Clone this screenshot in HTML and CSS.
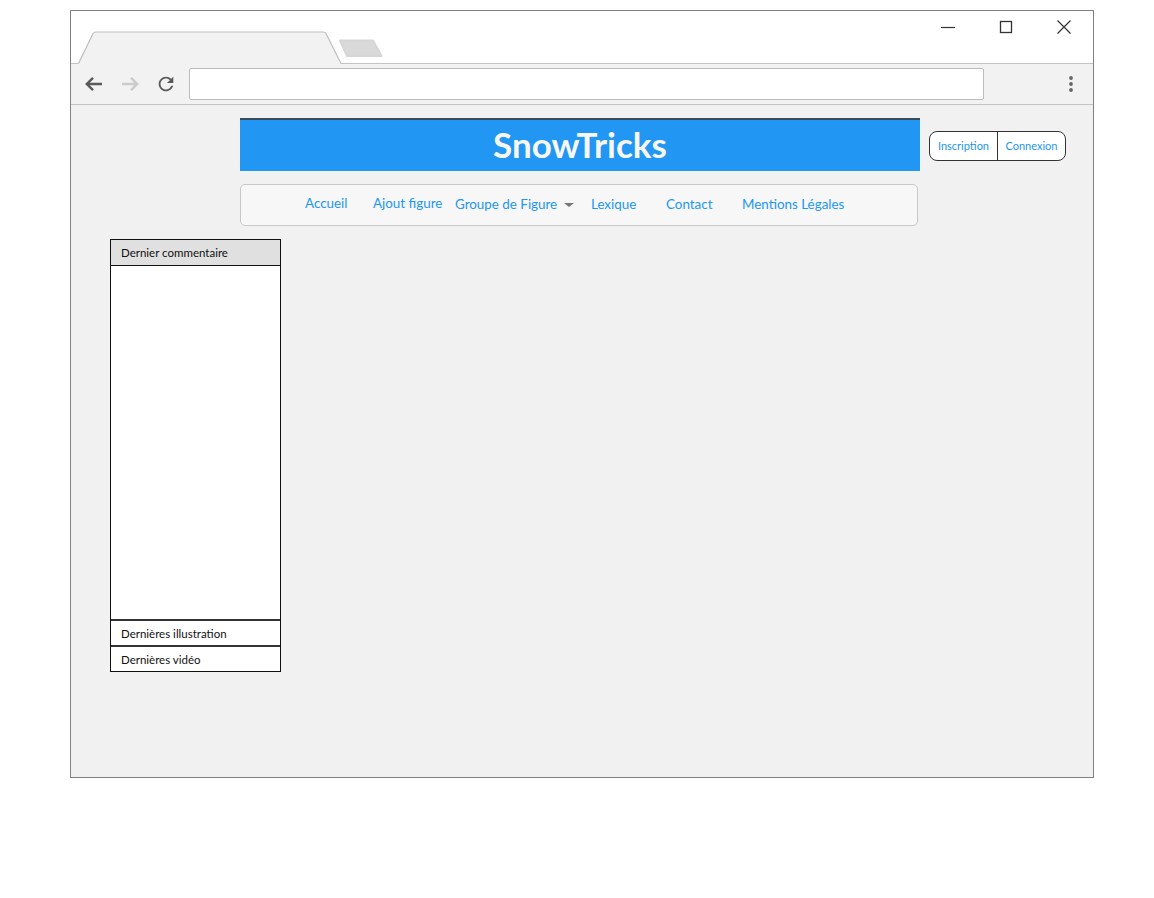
FILE: index.html
```html
<!DOCTYPE html>
<html lang="fr">
<head>
<meta charset="utf-8">
<title>SnowTricks</title>
<link rel="stylesheet" href="styles.css">
</head>
<body>
<div class="window">
  <div class="titlebar">
    <svg class="tabs" width="320" height="53" viewBox="0 0 320 53">
      <path d="M7,53 L22,22.5 Q23,21 25,21 L252,21 Q254,21 255,22.5 L270,53 Z" fill="#f2f2f2"/>
      <path d="M7.5,52.5 L22,22.5 Q23,21 25,21 L252,21 Q254,21 255,22.5 L270,52.5" fill="none" stroke="#bdbdbd" stroke-width="1.2"/>
      <path d="M269,29.5 L302,29.5 L310.5,45 L276,45 Z" fill="#d9d9d9" stroke="#d6d6d6" stroke-width="2" stroke-linejoin="round"/>
    </svg>
    <div class="controls">
      <div class="ctl">
        <svg width="16" height="16" viewBox="0 0 16 16"><path d="M1,8.5 H15" stroke="#333" stroke-width="1.2"/></svg>
      </div>
      <div class="ctl">
        <svg width="16" height="16" viewBox="0 0 16 16"><rect x="2.5" y="2.5" width="11" height="11" fill="none" stroke="#333" stroke-width="1.3"/></svg>
      </div>
      <div class="ctl">
        <svg width="16" height="16" viewBox="0 0 16 16"><path d="M1.5,1.5 L14.5,14.5 M14.5,1.5 L1.5,14.5" stroke="#333" stroke-width="1.2"/></svg>
      </div>
    </div>
  </div>
  <div class="toolbar">
    <div class="tool">
      <svg width="20" height="20" viewBox="0 0 20 20"><path d="M18,10 H3 M9,3.8 L2.8,10 L9,16.2" fill="none" stroke="#5a5a5a" stroke-width="2.4"/></svg>
    </div>
    <div class="tool">
      <svg width="20" height="20" viewBox="0 0 20 20"><path d="M2,10 H17 M11,3.8 L17.2,10 L11,16.2" fill="none" stroke="#cccccc" stroke-width="2.4"/></svg>
    </div>
    <div class="tool">
      <svg width="22" height="22" viewBox="0 0 24 24"><path fill="#5a5a5a" d="M17.65 6.35C16.2 4.9 14.21 4 12 4c-4.42 0-7.99 3.58-7.99 8s3.57 8 7.99 8c3.730 0 6.84-2.55 7.73-6h-2.08c-.82 2.33-3.04 4-5.65 4-3.31 0-6-2.69-6-6s2.690-6 6-6c1.66 0 3.14.69 4.22 1.78L13 11h7V4l-2.35 2.35z"/></svg>
    </div>
    <div class="address"></div>
    <div class="menu">
      <svg width="6" height="18" viewBox="0 0 6 18"><circle cx="3" cy="3" r="1.9" fill="#666"/><circle cx="3" cy="9" r="1.9" fill="#666"/><circle cx="3" cy="15" r="1.9" fill="#666"/></svg>
    </div>
  </div>
  <div class="content">
    <div class="top-row">
      <header class="site-header"><h1 class="site-title">SnowTricks</h1></header>
      <div class="auth">
        <a class="auth-btn auth-left" href="#">Inscription</a>
        <a class="auth-btn auth-right" href="#">Connexion</a>
      </div>
    </div>
    <nav class="nav">
      <a class="nav-item w-accueil up" href="#">Accueil</a>
      <a class="nav-item w-ajout up" href="#">Ajout figure</a>
      <a class="nav-item w-groupe" href="#">Groupe de Figure <span class="caret"></span></a>
      <a class="nav-item w-lexique" href="#">Lexique</a>
      <a class="nav-item w-contact" href="#">Contact</a>
      <a class="nav-item" href="#">Mentions Légales</a>
    </nav>
    <aside class="sidebar">
      <div class="side-head">Dernier commentaire</div>
      <div class="side-body"></div>
      <div class="side-row sep">Dernières illustration</div>
      <div class="side-row sep">Dernières vidéo</div>
    </aside>
  </div>
</div>
</body>
</html>
```
FILE: styles.css
```css
* { box-sizing: border-box; }
html, body { margin: 0; padding: 0; background: #ffffff; }
body { font-family: "Lato", "Liberation Sans", sans-serif; }

.window {
  margin: 10px 0 0 70px;
  width: 1024px;
  height: 768px;
  border: 1px solid #808080;
  display: flex;
  flex-direction: column;
  background: #ffffff;
}

.titlebar {
  height: 52px;
  display: flex;
  flex: none;
}
.tabs {
  display: block;
  flex: none;
  position: relative;
  z-index: 1;
  margin-bottom: -1px;
}
.controls { margin-left: auto; display: flex; }
.ctl {
  width: 58px;
  height: 32px;
  display: flex;
  align-items: center;
  justify-content: center;
}
.ctl svg { display: block; }

.toolbar {
  flex: none;
  height: 42px;
  background: #f2f2f2;
  border-top: 1px solid #c4c4c4;
  border-bottom: 1px solid #c4c4c4;
  display: flex;
  align-items: center;
  padding-left: 5px;
}
.tool {
  width: 36px;
  height: 36px;
  display: flex;
  align-items: center;
  justify-content: center;
}
.address {
  margin-left: 5px;
  width: 795px;
  height: 32px;
  background: #ffffff;
  border: 1px solid #bcbcbc;
  border-radius: 2px;
}
.menu {
  margin-left: auto;
  width: 44px;
  display: flex;
  justify-content: center;
}
.menu svg { display: block; }

.content {
  flex: 1;
  background: #f1f1f1;
  padding-top: 13px;
}

.top-row {
  display: flex;
  align-items: center;
  margin-left: 169px;
}
.site-header {
  width: 680px;
  height: 53px;
  background: #2196f3;
  border-top: 2px solid #3b4b5a;
  display: flex;
  align-items: center;
  justify-content: center;
}
.site-title {
  margin: 0;
  color: #f7f7f7;
  font-size: 35px;
  font-weight: 700;
  line-height: 1;
  padding-bottom: 2px;
}

.auth {
  margin-left: 9px;
  margin-top: 2px;
  display: flex;
  height: 30px;
  border: 1px solid #333333;
  border-radius: 8px;
  background: #ffffff;
}
.auth-btn {
  display: flex;
  align-items: center;
  justify-content: center;
  color: #2196f3;
  text-decoration: none;
  font-size: 11px;
}
.auth-left { width: 68px; border-right: 1px solid #333333; }
.auth-right { width: 67px; }

.nav {
  margin: 13px 0 0 169px;
  width: 678px;
  height: 42px;
  background: #f7f7f7;
  border: 1px solid #c8c8c8;
  border-radius: 5px;
  display: flex;
  align-items: center;
  padding-left: 64px;
  padding-bottom: 3px;
}
.nav-item {
  color: #2196f3;
  text-decoration: none;
  font-size: 13.4px;
  white-space: nowrap;
  display: flex;
  align-items: center;
  flex: none;
}
.nav-item.up { margin-top: -2px; }
.w-accueil { width: 68px; }
.w-ajout { width: 82px; }
.w-groupe { width: 136px; }
.w-lexique { width: 75px; }
.w-contact { width: 76px; }
.caret {
  display: inline-block;
  margin-left: 7px;
  width: 0;
  height: 0;
  border-left: 5px solid transparent;
  border-right: 5px solid transparent;
  border-top: 4px solid #777777;
  margin-top: 3px;
}

.sidebar {
  margin: 13px 0 0 39px;
  width: 171px;
  border: 1px solid #111111;
  background: #ffffff;
  font-size: 11.5px;
  color: #111111;
}
.side-head {
  height: 26px;
  background: #e0e0e0;
  border-bottom: 1px solid #111111;
  padding-left: 10px;
  display: flex;
  align-items: center;
}
.side-body { height: 353px; }
.side-row {
  height: 26px;
  border-top: 2px solid #333333;
  padding-left: 10px;
  display: flex;
  align-items: center;
}
```
